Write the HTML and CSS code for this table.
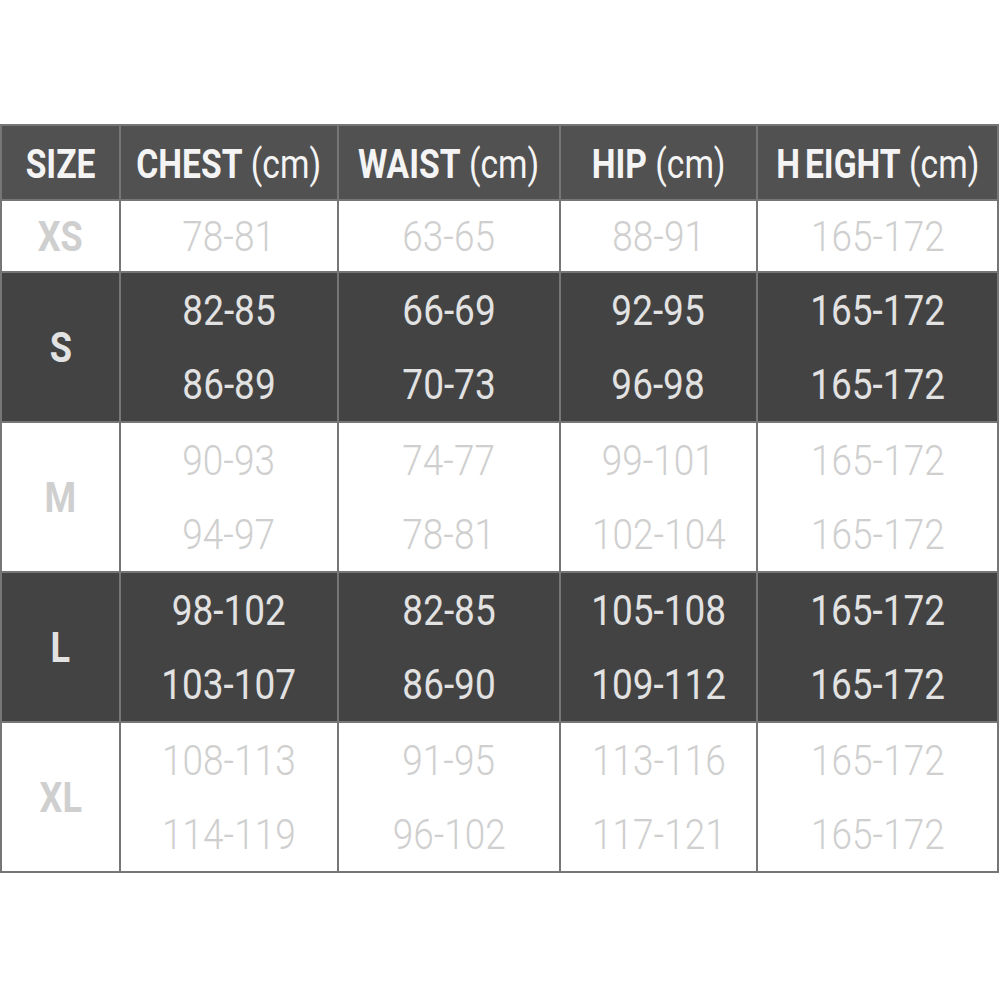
FILE: index.html
```html
<!DOCTYPE html>
<html>
<head>
<meta charset="utf-8">
<link rel="stylesheet" href="styles.css">
</head>
<body>
<div class="chart">
  <div class="cell head"><span class="t"><b>SIZE</b></span></div>
  <div class="cell head"><span class="t"><b>CHEST</b> (cm)</span></div>
  <div class="cell head"><span class="t"><b>WAIST</b> (cm)</span></div>
  <div class="cell head"><span class="t"><b>HIP</b> (cm)</span></div>
  <div class="cell head"><span class="t"><b><span class="gap">H</span>EIGHT</b> (cm)</span></div>

  <div class="cell light size"><span class="t">XS</span></div>
  <div class="cell light"><div class="line"><span class="t">78-81</span></div></div>
  <div class="cell light"><div class="line"><span class="t">63-65</span></div></div>
  <div class="cell light"><div class="line"><span class="t">88-91</span></div></div>
  <div class="cell light"><div class="line"><span class="t">165-172</span></div></div>

  <div class="cell dark size"><span class="t">S</span></div>
  <div class="cell dark"><div class="line"><span class="t">82-85</span></div><div class="line"><span class="t">86-89</span></div></div>
  <div class="cell dark"><div class="line"><span class="t">66-69</span></div><div class="line"><span class="t">70-73</span></div></div>
  <div class="cell dark"><div class="line"><span class="t">92-95</span></div><div class="line"><span class="t">96-98</span></div></div>
  <div class="cell dark"><div class="line"><span class="t">165-172</span></div><div class="line"><span class="t">165-172</span></div></div>

  <div class="cell light size"><span class="t">M</span></div>
  <div class="cell light"><div class="line"><span class="t">90-93</span></div><div class="line"><span class="t">94-97</span></div></div>
  <div class="cell light"><div class="line"><span class="t">74-77</span></div><div class="line"><span class="t">78-81</span></div></div>
  <div class="cell light"><div class="line"><span class="t">99-101</span></div><div class="line"><span class="t">102-104</span></div></div>
  <div class="cell light"><div class="line"><span class="t">165-172</span></div><div class="line"><span class="t">165-172</span></div></div>

  <div class="cell dark size"><span class="t">L</span></div>
  <div class="cell dark"><div class="line"><span class="t">98-102</span></div><div class="line"><span class="t">103-107</span></div></div>
  <div class="cell dark"><div class="line"><span class="t">82-85</span></div><div class="line"><span class="t">86-90</span></div></div>
  <div class="cell dark"><div class="line"><span class="t">105-108</span></div><div class="line"><span class="t">109-112</span></div></div>
  <div class="cell dark"><div class="line"><span class="t">165-172</span></div><div class="line"><span class="t">165-172</span></div></div>

  <div class="cell light size"><span class="t">XL</span></div>
  <div class="cell light"><div class="line"><span class="t">108-113</span></div><div class="line"><span class="t">114-119</span></div></div>
  <div class="cell light"><div class="line"><span class="t">91-95</span></div><div class="line"><span class="t">96-102</span></div></div>
  <div class="cell light"><div class="line"><span class="t">113-116</span></div><div class="line"><span class="t">117-121</span></div></div>
  <div class="cell light"><div class="line"><span class="t">165-172</span></div><div class="line"><span class="t">165-172</span></div></div>
</div>
</body>
</html>
```
FILE: styles.css
```css
html, body {
  margin: 0;
  padding: 0;
  background: #ffffff;
}
body {
  padding-top: 124px;
  font-family: Roboto, "Liberation Sans", sans-serif;
}
.chart {
  width: 999px;
  box-sizing: border-box;
  display: grid;
  grid-template-columns: 117px 216px 220px 195px 239px;
  grid-template-rows: 73px 70px 148px 148px 148px 148px;
  gap: 2px;
  padding: 2px;
  background: #767676;
}
.cell {
  display: flex;
  flex-direction: column;
  align-items: center;
  justify-content: center;
  overflow: hidden;
}
.head {
  background: #515151;
  color: #f4f4f4;
  font-size: 41px;
  font-weight: 400;
  padding-top: 3px;
  box-sizing: border-box;
}
.head .t {
  display: inline-block;
  transform: scaleX(0.82);
  white-space: nowrap;
}
.head b {
  font-weight: 700;
}
.gap {
  margin-right: 6px;
}
.light {
  background: #ffffff;
  color: #cfcfcf;
}
.dark {
  background: #434343;
  color: #e2e2e2;
}
.line {
  height: 74px;
  display: flex;
  align-items: center;
  justify-content: center;
  font-size: 42px;
  font-weight: 300;
}
.dark .line {
  font-weight: 400;
}
.line .t {
  display: inline-block;
  transform: scaleX(0.88);
  white-space: nowrap;
}
.size {
  font-size: 42px;
  font-weight: 700;
}
.size .t {
  display: inline-block;
  transform: scaleX(0.86);
}
```
